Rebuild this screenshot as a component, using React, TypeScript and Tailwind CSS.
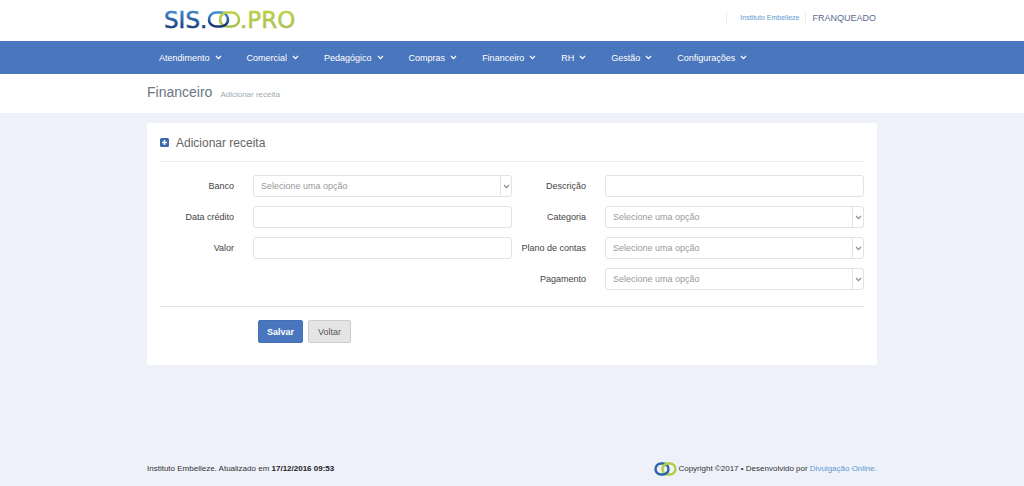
import { useState } from 'react'
import type { ReactNode } from 'react'

const MENU = ['Atendimento', 'Comercial', 'Pedagógico', 'Compras', 'Financeiro', 'RH', 'Gestão', 'Configurações']

const CONTROL = 'block w-full h-[22px] rounded-[3px] border border-[#e2e2e4] bg-white px-[7px] text-[9px] outline-none focus:border-[#4a76bd]'

function Chevron({ className }: { className: string }) {
  return (
    <svg viewBox="0 0 8 6" className={className} fill="none" stroke="currentColor" aria-hidden="true">
      <path d="M1 1.2 4 4.4 7 1.2" strokeWidth="1.4" />
    </svg>
  )
}

function Logo() {
  return (
    <svg width="140" height="30" viewBox="0 0 140 30" role="img" aria-label="SIS.OO.PRO">
      <defs>
        <linearGradient id="sis" x1="0" y1="0" x2="0" y2="1">
          <stop offset="0.1" stopColor="#3f8fd0" />
          <stop offset="0.85" stopColor="#173a75" />
        </linearGradient>
        <linearGradient id="pro" x1="0" y1="0" x2="0" y2="1">
          <stop offset="0" stopColor="#bcd344" />
          <stop offset="1" stopColor="#a6bf52" />
        </linearGradient>
      </defs>
      <text x="0" y="22" fill="url(#sis)" stroke="url(#sis)" strokeWidth="0.5" className="font-['DejaVu_Sans',sans-serif] text-[23px]">SIS.</text>
      <text x="76" y="22" fill="url(#pro)" stroke="url(#pro)" strokeWidth="0.5" className="font-['DejaVu_Sans',sans-serif] text-[23px]">.PRO</text>
      <rect x="56" y="6.5" width="19" height="14" rx="7" fill="none" stroke="url(#pro)" strokeWidth="2.6" />
      <rect x="45" y="6.5" width="19" height="14" rx="7" fill="none" stroke="url(#sis)" strokeWidth="2.6" />
      <path d="M56 13.5 A7 7 0 0 1 63 6.5" fill="none" stroke="#b9cf4b" strokeWidth="2.6" />
    </svg>
  )
}

function Rings() {
  return (
    <svg width="23" height="14" viewBox="0 0 23 14" aria-hidden="true">
      <rect x="8.5" y="1.5" width="13" height="11" rx="5.5" fill="none" stroke="#b3ce48" strokeWidth="2.4" />
      <rect x="1.5" y="1.5" width="13" height="11" rx="5.5" fill="none" stroke="#2a66a8" strokeWidth="2.4" />
      <path d="M8.5 7 A5.5 5.5 0 0 1 14 1.5" fill="none" stroke="#b3ce48" strokeWidth="2.4" />
    </svg>
  )
}

function Field({ id, label, children }: { id: string; label: string; children: ReactNode }) {
  return (
    <div className="flex items-center">
      <label htmlFor={id} className="w-[74px] shrink-0 whitespace-nowrap text-right">{label}</label>
      <div className="ml-[19px] min-w-0 flex-1">{children}</div>
    </div>
  )
}

function TextField({ id, label }: { id: string; label: string }) {
  const [value, setValue] = useState('')
  return (
    <Field id={id} label={label}>
      <input id={id} type="text" value={value} onChange={e => setValue(e.target.value)} className={CONTROL} />
    </Field>
  )
}

function SelectField({ id, label }: { id: string; label: string }) {
  return (
    <Field id={id} label={label}>
      <div className="relative">
        <select id={id} className={`${CONTROL} appearance-none text-[#999]`}>
          <option>Selecione uma opção</option>
        </select>
        <span className="pointer-events-none absolute inset-y-px right-px flex w-[11px] items-center justify-center border-l border-[#e2e2e4] text-[#8b8b8b]">
          <Chevron className="h-[5px] w-[7px]" />
        </span>
      </div>
    </Field>
  )
}

export default function App() {
  return (
    <div className="flex min-h-screen flex-col bg-[#eef1f9] font-['Liberation_Sans',Arial,sans-serif] text-[9px] leading-3 text-[#444]">
      <header className="bg-white">
        <div className="mx-auto flex h-[41px] max-w-[730px] items-center justify-between">
          <a href="#" className="ml-[17px] block">
            <Logo />
          </a>
          <div className="mb-[5px] flex items-center">
            <a href="#" className="border-x border-[#ebeef2] pl-[13px] pr-[6px] text-[7px] text-[#5b9bd1]">Instituto Embelleze</a>
            <span className="px-[6px] pr-px text-[#5a6a8c]">FRANQUEADO</span>
          </div>
        </div>
      </header>

      <nav className="bg-[#4a76bd]">
        <ul className="mx-auto flex h-[33px] max-w-[730px] items-center gap-[25px] pl-3">
          {MENU.map(item => (
            <li key={item}>
              <a href="#" className="flex items-center gap-[5px] text-white">
                {item}
                <Chevron className="h-[5px] w-[7px]" />
              </a>
            </li>
          ))}
        </ul>
      </nav>

      <div className="bg-white">
        <div className="mx-auto flex h-[39px] max-w-[730px] items-center">
          <h1 className="flex items-baseline gap-2 text-[14px] leading-4 text-[#697882]">
            Financeiro
            <small className="text-[8px] text-[#9eacb4]">Adicionar receita</small>
          </h1>
        </div>
      </div>

      <main className="mx-auto mt-[10px] w-full max-w-[730px] rounded-[2px] bg-white px-[13px] pb-[22px]">
        <div className="flex h-[39px] items-center gap-[7px] border-b border-[#eee] pt-px">
          <svg width="9" height="9" viewBox="0 0 9 9" aria-hidden="true">
            <rect width="9" height="9" rx="1.5" fill="#3f69ad" />
            <path d="M4.5 2V7M2 4.5H7" stroke="#fff" strokeWidth="1.5" />
          </svg>
          <h2 className="text-[12px] leading-4 text-[#666]">Adicionar receita</h2>
        </div>

        <form onSubmit={e => e.preventDefault()}>
          <div className="grid grid-cols-2 pb-4 pt-[13px]">
            <div className="flex flex-col gap-[9px]">
              <SelectField id="banco" label="Banco" />
              <TextField id="data" label="Data crédito" />
              <TextField id="valor" label="Valor" />
            </div>
            <div className="flex flex-col gap-[9px]">
              <TextField id="descricao" label="Descrição" />
              <SelectField id="categoria" label="Categoria" />
              <SelectField id="plano" label="Plano de contas" />
              <SelectField id="pagamento" label="Pagamento" />
            </div>
          </div>
          <div className="flex gap-[5px] border-t border-[#e5e5e5] pl-[98px] pt-[13px]">
            <button type="submit" className="h-[23px] rounded-[2px] border border-[#4470b8] bg-[#4a76bd] px-2 font-bold text-white">Salvar</button>
            <button type="button" className="h-[23px] rounded-[2px] border border-[#ccc] bg-[#e5e5e5] px-[9px] text-[#555]">Voltar</button>
          </div>
        </form>
      </main>

      <footer className="mx-auto mt-auto flex w-full max-w-[730px] items-center justify-between pb-[10px] text-[8px] text-[#333]">
        <p className="mb-px">
          Instituto Embelleze. Atualizado em <b className="text-[#222]">17/12/2016 09:53</b>
        </p>
        <p className="flex items-center gap-px">
          <Rings />
          <span>
            Copyright ©2017 • Desenvolvido por <a href="#" className="text-[#5b9bd1]">Divulgação Online.</a>
          </span>
        </p>
      </footer>
    </div>
  )
}
